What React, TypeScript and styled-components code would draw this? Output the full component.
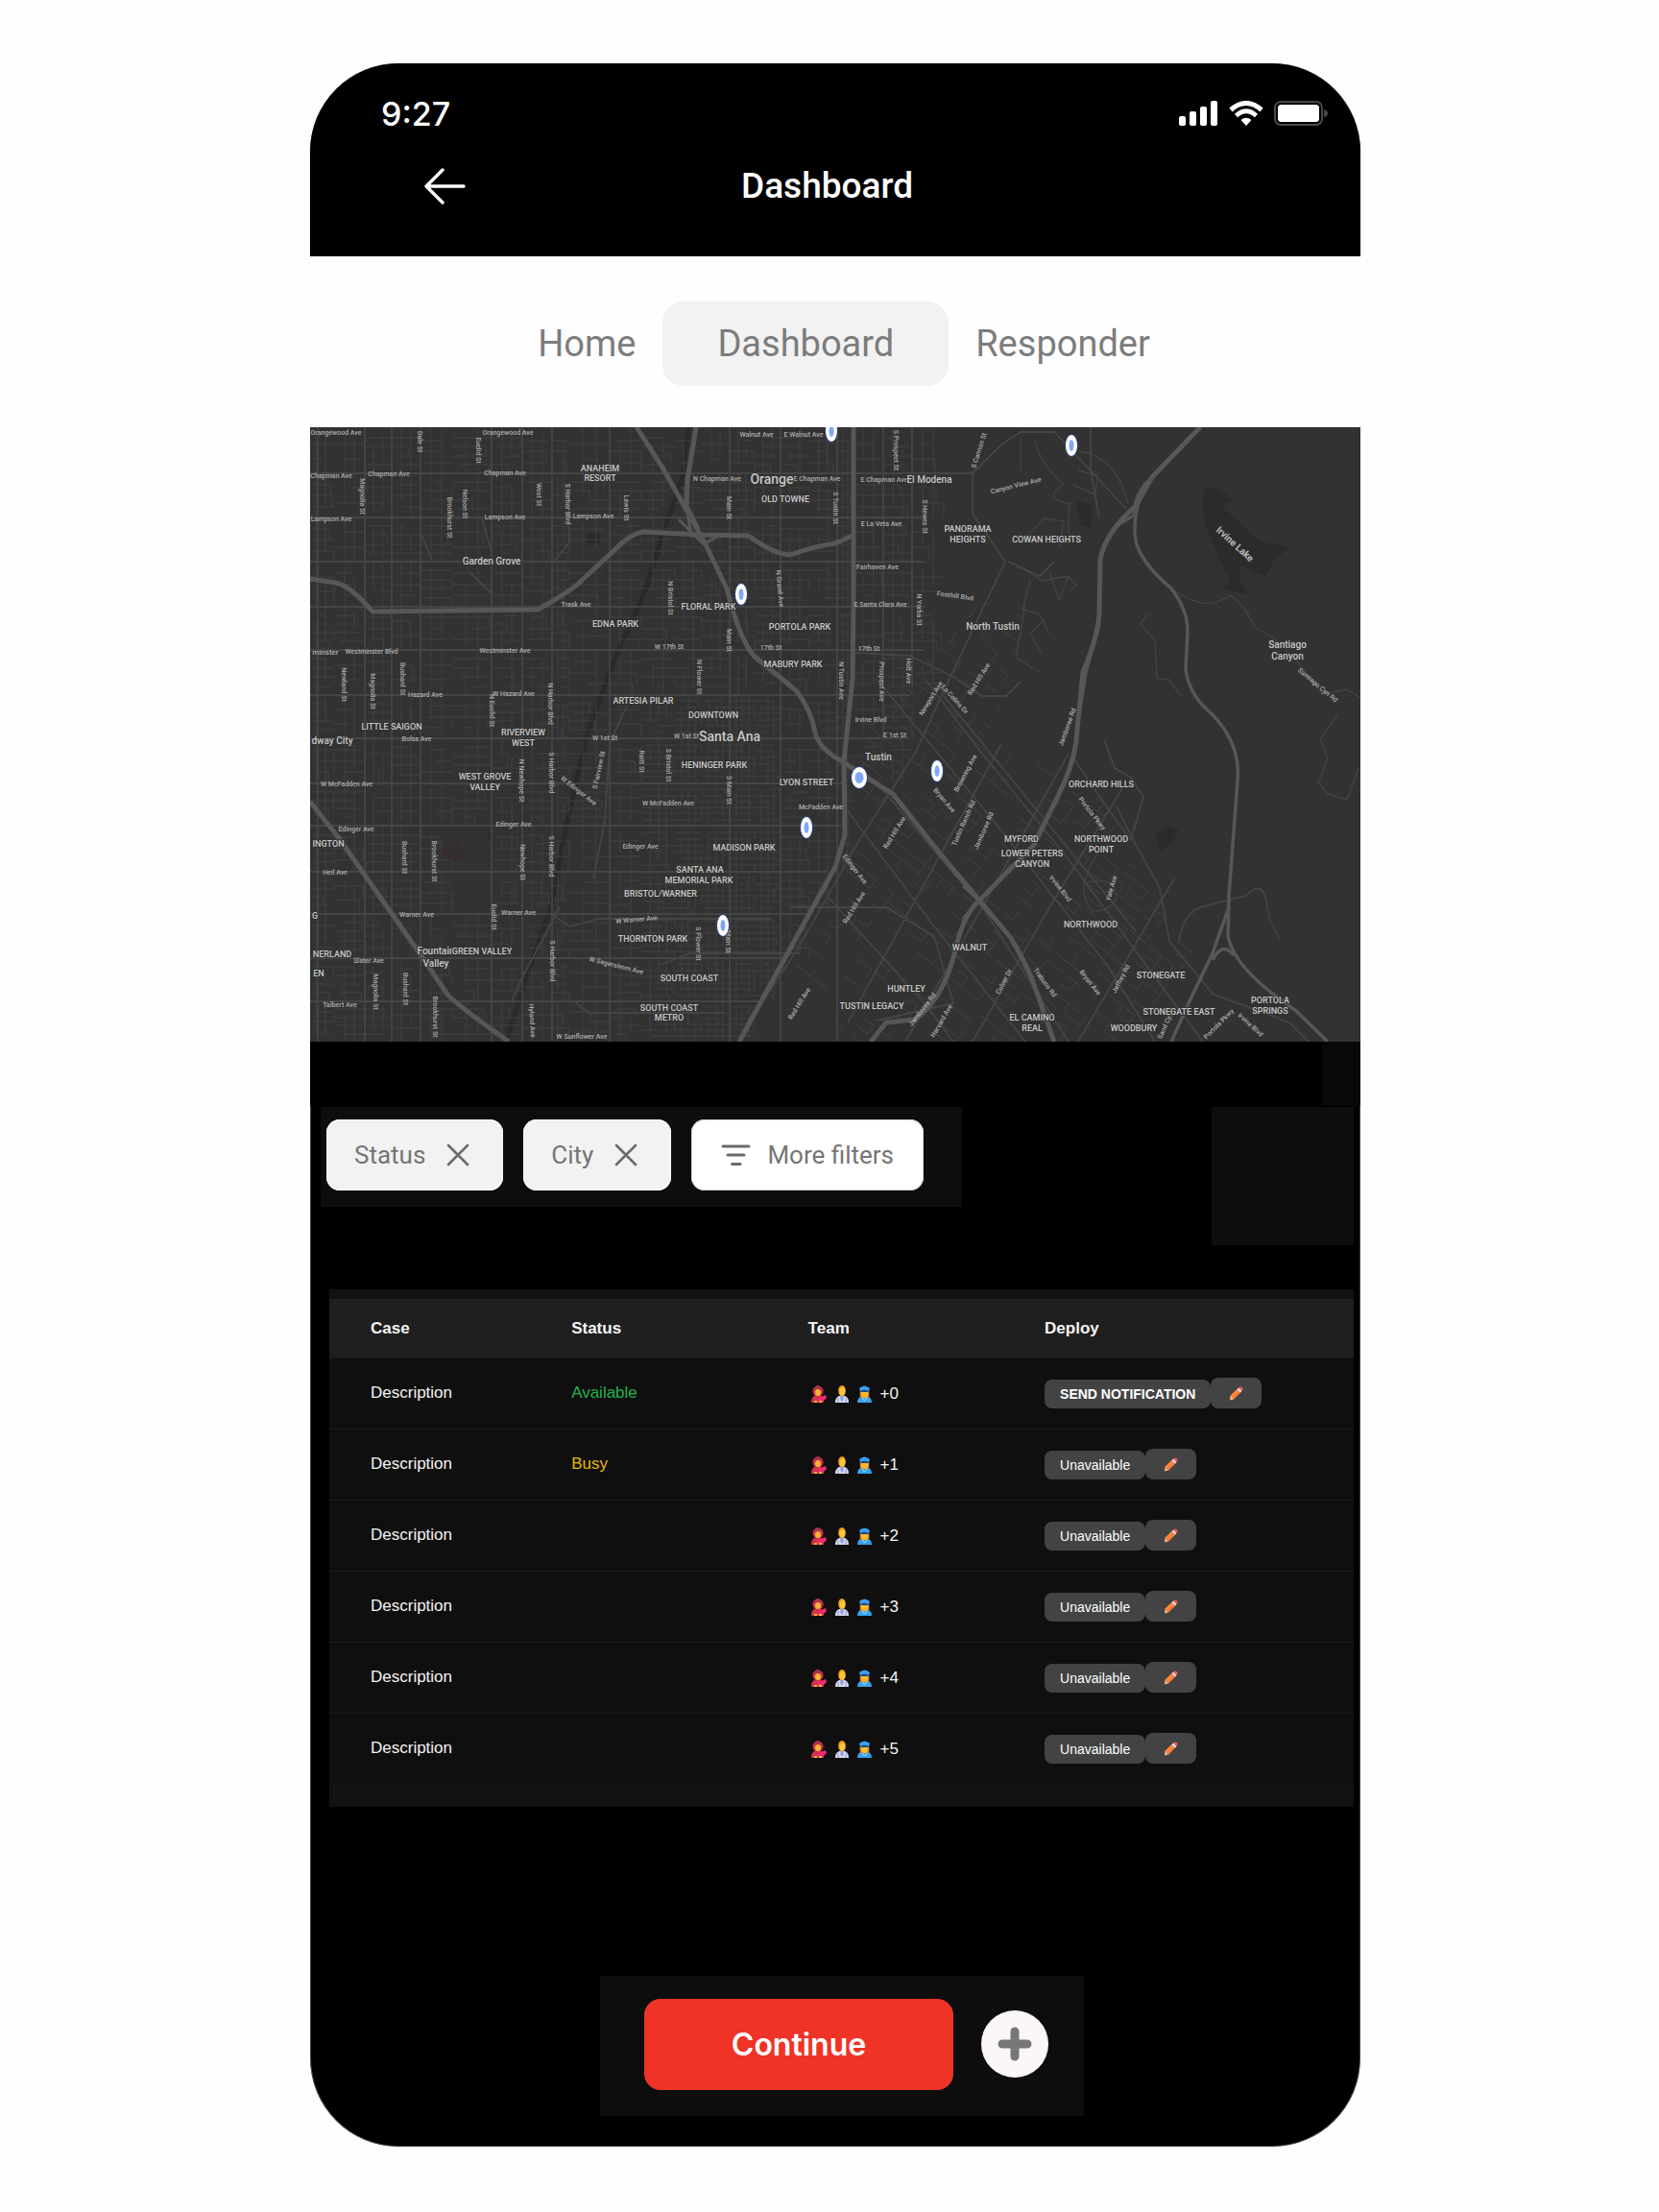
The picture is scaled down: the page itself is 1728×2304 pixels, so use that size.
import React from "react";
import styled, { createGlobalStyle } from "styled-components";

const GlobalStyle = createGlobalStyle`
  *, *::before, *::after { box-sizing: border-box; }
  body { margin: 0; background: #fefefe; font-family: Roboto, "Liberation Sans", sans-serif; }
  button { font: inherit; border: 0; cursor: pointer; }
`;

/* ---------- shell ---------- */

const Page = styled.div`
  padding: 66px 311px 69px 323px;
`;

const Phone = styled.div`
  display: flex;
  flex-direction: column;
`;

const Header = styled.header`
  height: 201px;
  padding-top: 30px;
  background: #000;
  color: #fff;
  border-radius: 92px 92px 0 0;
  box-shadow: 0 0 1px #555;
`;

const StatusBar = styled.div`
  display: flex;
  justify-content: space-between;
  align-items: center;
  height: 44px;
  padding: 0 34px 0 74px;
  font-family: Inter, Roboto, sans-serif;
  font-size: 34px;
  font-weight: 500;
`;

const StatusIcons = styled.div`
  display: flex;
  align-items: center;
  gap: 11px;
`;

const TitleBar = styled.div`
  display: grid;
  grid-template-columns: 1fr auto 1fr;
  align-items: center;
  height: 44px;
  margin-top: 32px;
  padding: 0 135px 0 118px;
`;

const BackButton = styled.button`
  justify-self: start;
  display: flex;
  padding: 0;
  background: none;
  color: #fff;
`;

const Title = styled.h1`
  margin: 0;
  font-size: 37px;
  font-weight: 500;
  line-height: 44px;
`;

const Tabs = styled.nav`
  display: flex;
  align-items: center;
  justify-content: center;
  gap: 28px;
  height: 178px;
  padding: 3px 0 0 18px;
  background: #fefefe;
`;

const Tab = styled.a<{ $active?: boolean }>`
  padding: 0 ${(p) => (p.$active ? 57 : 0)}px;
  border-radius: 22px;
  background: ${(p) => (p.$active ? "#f2f2f2" : "none")};
  color: #7c7c7c;
  font-size: 38px;
  line-height: 88px;
  text-decoration: none;
`;

const Band = styled.div`
  display: flex;
  justify-content: flex-end;
  height: 67px;
  background: #000;
  &::after {
    content: "";
    width: 40px;
    background: #080808;
  }
`;

const Body = styled.main`
  background: #000;
  border: solid #444;
  border-width: 0 1px 1px 1px;
  border-radius: 0 0 92px 92px;
  padding: 1px 6px 31px 10px;
`;

/* ---------- filters ---------- */

const FilterRow = styled.div`
  display: flex;
  justify-content: space-between;
  align-items: flex-start;
`;

const FilterPanel = styled.div`
  display: flex;
  gap: 21px;
  width: 668px;
  padding: 13px 6px 17px;
  background: #0d0d0d;
`;

const SidePatch = styled.div`
  width: 148px;
  height: 144px;
  background: #0d0d0d;
`;

const Chip = styled.button<{ $solid?: boolean }>`
  display: flex;
  align-items: center;
  gap: ${(p) => (p.$solid ? 17 : 22)}px;
  height: 74px;
  padding: 0 ${(p) => (p.$solid ? 31 : 35)}px 0 ${(p) => (p.$solid ? 31 : 29)}px;
  border-radius: 14px;
  background: ${(p) => (p.$solid ? "#fff" : "#f2f2f2")};
  box-shadow: inset 0 0 0 1px ${(p) => (p.$solid ? "#cfd4e0" : "#fafafa")};
  color: #757575;
  font-size: 26px;
  white-space: nowrap;
`;

/* ---------- table ---------- */

const TableCard = styled.section`
  margin: 46px 0 0 9px;
  padding: 10px 0 24px;
  background: #121212;
`;

const Table = styled.table`
  width: 100%;
  table-layout: fixed;
  border-collapse: collapse;
  font-family: "Liberation Sans", Arial, sans-serif;
  font-size: 17px;
  color: #f4f4f4;
`;

const HeadCell = styled.th<{ $share?: string }>`
  width: ${(p) => p.$share ?? "auto"};
  height: 61px;
  padding: 0 0 0 43px;
  text-align: left;
  background: #1f1f1f;
`;

const Cell = styled.td<{ $tone?: string }>`
  height: 74px;
  padding: 0 0 0 43px;
  background: #0f0f0f;
  color: ${(p) => p.$tone ?? "inherit"};
  box-shadow: inset 0 1px 0 #1c1c1c;
`;

const Team = styled.div`
  display: flex;
  align-items: center;
  gap: 9px;
  padding: 2px 0 0 3px;
`;

const Actions = styled.div`
  display: flex;
  align-items: flex-end;
`;

const ActionButton = styled.button<{ $strong?: boolean }>`
  height: 30px;
  padding: 0 16px;
  border-radius: 8px;
  background: #434343;
  color: #fff;
  font-size: 14px;
  font-weight: ${(p) => (p.$strong ? 700 : 400)};
  white-space: nowrap;
`;

const EditButton = styled.button`
  display: flex;
  align-items: center;
  justify-content: center;
  width: 53px;
  height: 32px;
  padding: 0;
  border-radius: 8px;
  background: #434343;
`;

/* ---------- footer ---------- */

const Footer = styled.div`
  display: flex;
  align-items: center;
  gap: 29px;
  width: 504px;
  height: 146px;
  margin: 176px 0 0 291px;
  padding: 0 0 4px 46px;
  background: #0d0d0d;
`;

const ContinueButton = styled.button`
  width: 322px;
  height: 95px;
  border-radius: 17px;
  background: #ef3326;
  color: #fff;
  font-family: Inter, Roboto, sans-serif;
  font-size: 32px;
  font-weight: 600;
`;

const AddButton = styled.button`
  display: flex;
  align-items: center;
  justify-content: center;
  width: 70px;
  height: 70px;
  padding: 0;
  border-radius: 50%;
  background: #fcf7f7;
`;

/* ---------- icons ---------- */

const Signal = () => (
  <svg width="41" height="26" viewBox="0 0 41 26" fill="#fff" aria-hidden="true">
    <rect x="0" y="16" width="7" height="10" rx="2" />
    <rect x="11" y="11" width="7" height="15" rx="2" />
    <rect x="22" y="6" width="7" height="20" rx="2" />
    <rect x="33" y="0" width="7" height="26" rx="2" />
  </svg>
);

const Wifi = () => (
  <svg width="36" height="26" viewBox="0 0 36 26" fill="none" stroke="#fff" aria-hidden="true">
    <path d="M2 9.5 Q18 -4.5 34 9.5" strokeWidth="5" />
    <path d="M7.5 15.5 Q18 6 28.5 15.5" strokeWidth="4.6" />
    <path d="M12.500 20 Q18 15.500 23.500 20 L18 26Z" fill="#fff" stroke="none" />
  </svg>
);

const Battery = () => (
  <svg width="56" height="26" viewBox="0 0 56 26" aria-hidden="true">
    <rect x="1" y="1" width="49" height="24" rx="6" fill="none" stroke="#4a4a4a" strokeWidth="2" />
    <rect x="4" y="4" width="43" height="18" rx="3.500" fill="#fff" />
    <path d="M52 9 Q56 10 56 13 Q56 16 52 17Z" fill="#4a4a4a" />
  </svg>
);

const Arrow = () => (
  <svg width="44" height="38" viewBox="0 0 44 38" fill="none" stroke="currentColor" strokeWidth="3.400" strokeLinecap="round" strokeLinejoin="round" aria-hidden="true">
    <path d="M42 19H3M20 2L3 19L20 36" />
  </svg>
);

const Cross = () => (
  <svg width="24" height="24" viewBox="0 0 24 24" stroke="#6b6b6b" strokeWidth="2.600" strokeLinecap="round" aria-hidden="true">
    <path d="M2 2L22 22M22 2L2 22" />
  </svg>
);

const FilterIcon = () => (
  <svg width="31" height="24" viewBox="0 0 31 24" stroke="#6b6b6b" strokeWidth="3" strokeLinecap="round" aria-hidden="true">
    <path d="M2 3H29M7 12H24M11.500 21.500H20" />
  </svg>
);

const Plus = () => (
  <svg width="36" height="36" viewBox="0 0 36 36" stroke="#777" strokeWidth="9" strokeLinecap="round" aria-hidden="true">
    <path d="M18 5V31M5 18H31" />
  </svg>
);

const Pencil = () => (
  <svg width="15" height="15" viewBox="0 0 15 15" aria-hidden="true">
    <path d="M1.500 9.500L9 2.500L12.500 6L5 13.500Z" fill="#ff8a3d" />
    <path d="M3.500 11.500L10.500 4.500L12.500 6L5 13.500Z" fill="#f8793c" />
    <path d="M1.500 9.500L5 13.500L1 14.500Z" fill="#f3b48b" />
    <path d="M8.500 3L10.500 1.500L13.500 4.500L12 6.500Z" fill="#dfe3ec" />
    <path d="M10 1.500Q12 -0.500 13.800 1.200Q15.500 3 13.500 5Z" fill="#ee5a5a" />
  </svg>
);

const Firefighter = () => (
  <svg width="16" height="18" viewBox="0 0 16 18" aria-hidden="true">
    <path d="M0 18Q0 10 7 10Q13 10 13 18Z" fill="#d5314f" />
    <circle cx="7" cy="6" r="5.500" fill="#d12f50" />
    <ellipse cx="7" cy="7.500" rx="3" ry="3.600" fill="#f7b52c" />
    <path d="M3 5Q7 2 11 5V4Q9 0 7 0Q4 0 3 4Z" fill="#a9354a" />
    <path d="M7 13L15 10L16 13L12 17H7Z" fill="#ee2c70" />
    <path d="M3 16H6V18H3ZM8 16H11V18H8Z" fill="#f7b52c" />
  </svg>
);

const Medic = () => (
  <svg width="14" height="18" viewBox="0 0 14 18" aria-hidden="true">
    <path d="M0 18Q0 10.500 7 10.500Q14 10.500 14 18Z" fill="#d9dcf3" />
    <path d="M5 10H9L8.500 15L7 17L5.500 15Z" fill="#8ea1dc" />
    <ellipse cx="7" cy="5.500" rx="3.800" ry="5.500" fill="#f0a21c" />
    <ellipse cx="7.500" cy="6.500" rx="2.800" ry="4" fill="#fbc63b" />
    <path d="M3 13V18M11 13V18" stroke="#8c93c8" />
  </svg>
);

const Officer = () => (
  <svg width="15" height="18" viewBox="0 0 15 18" aria-hidden="true">
    <path d="M0 18Q0 11 7.500 11Q15 11 15 18Z" fill="#36a3ee" />
    <path d="M3 5Q2 12 4 13H11Q13 12 12 5Z" fill="#e58b22" />
    <ellipse cx="7.500" cy="8.500" rx="3.400" ry="4.200" fill="#fbbd35" />
    <path d="M2 3Q7.500 -2 13 3L12 6Q7.500 4 3 6Z" fill="#3b9ff0" />
    <path d="M3.500 5.500Q7.500 4 11.500 5.500V7H3.500Z" fill="#184a84" />
    <path d="M5 13L7.500 16L10 13" stroke="#bfe2ff" fill="none" />
  </svg>
);

/* ---------- map ---------- */

const MapSvg = styled.svg`
  display: block;
  width: 100%;
  height: auto;
  background: #323232;
  font-family: Roboto, "Liberation Sans", sans-serif;
`;

const random = (seed: number) => () => {
  seed = (seed * 16807) % 2147483647;
  return seed / 2147483647;
};

const XS = [-3, 25, 57, 85, 115, 148, 189, 221, 252, 270, 312, 345, 380, 408, 437, 463, 490, 520, 549, 566, 597, 627, 660];
const YS = [2, 48, 94, 140, 187, 232, 279, 324, 371, 415, 463, 507, 553, 598, 640];

const southEdge = (y: number) => (y < 340 ? (y < 240 ? 650 : 625) : 556 - Math.max(0, (y - 430) * 0.5));

/* Short residential streets that fill the blocks between arterials. */
const localStreets = () => {
  const r = random(97);
  let d = "";
  for (let i = 0; i < XS.length - 1; i++) {
    for (let j = 0; j < YS.length - 1; j++) {
      const x0 = XS[i], x1 = XS[i + 1], y0 = YS[j], y1 = YS[j + 1];
      if (x1 > southEdge(y0) + 10) continue;
      if (x0 > 130 && x1 < 195 && y0 > 410 && y0 < 500) continue;
      const w = x1 - x0, h = y1 - y0;
      const dense = x0 > 340 && x0 < 480 && y0 > 270;
      const n = dense ? 7 : 3 + Math.floor(r() * 3);
      for (let k = 1; k < n; k++) {
        const y = Math.round(y0 + (h * k) / n);
        const a = Math.round(x0 + (r() < 0.5 ? 0 : r() * w * 0.5));
        const b = Math.round(x1 - (r() < 0.5 ? 0 : r() * w * 0.5));
        d += `M${a} ${y}H${b}`;
        if (r() < 0.5) d += `V${Math.round(y + h / n)}`;
      }
      const m = dense ? 4 : 3;
      for (let k = 1; k < m; k++) {
        const x = Math.round(x0 + (w * k) / m);
        const a = Math.round(y0 + (r() < 0.4 ? 0 : r() * h * 0.5));
        const b = Math.round(y1 - (r() < 0.4 ? 0 : r() * h * 0.5));
        d += `M${x} ${a}V${b}`;
      }
    }
  }
  return d;
};

/* The rotated grid around Tustin and Irvine. */
const tiltedStreets = () => {
  const r = random(41);
  let d = "";
  for (let u = -220; u < 280; u += 11) {
    for (let v = -230; v < 230; v += 23) {
      if (r() < 0.48) continue;
      const du = r() < 0.5 ? 20 : 12;
      d += `M${u} ${v}v${du}`;
      if (r() < 0.6) d += `h${r() < 0.5 ? 11 : -11}`;
    }
  }
  return d;
};

const LOCAL = localStreets();
const TILTED = tiltedStreets();

const ARTERIALS =
  YS.slice(1, 14).map((y) => `M0 ${y}H${y < 250 ? 640 : southEdge(y)}`).join("") +
  [8, 57, 85, 115, 189, 221, 252, 312, 437, 490, 549].map((x) => `M${x} 0V640`).join("") +
  "M597 0V325M627 0V270M115 110L128 140M179 95L189 130M165 150L188 172M270 60V120L252 142M600 48H690L720 18L740 5H775L850 85" +
  "M690 48V90L724 140L700 190L660 275L630 340L572 430L510 540L450 630M727 140L760 155L775 140M640 262L700 340L790 450L900 600L930 640" +
  "M590 262L720 420L830 560L880 640M566 235L625 238L670 260L700 280L725 280L740 265M540 490L640 600L670 640M560 400L650 520L745 640" +
  "M590 370L700 500L790 640M660 280L860 525M790 340L700 500L620 640M850 370L770 500L690 640M900 470L800 640M720 330L560 620" +
  "M813 0V45L822 95M840 395L860 435L885 480L895 535L940 590L1020 620L1040 640M795 345L840 410L855 430L868 385L855 365L838 355L827 325M905 535Q910 502 935 498L975 488M975 488Q990 472 995 490M500 500H600L650 530L670 600L590 618M0 507H252L270 520L300 512H480M0 553H300M365 560L395 548H510M210 598L220 575L260 500M250 598H275L290 610H430M330 290L312 330L307 410L295 470";

const FREEWAYS = [
  "M0 158L27 162Q42 165 65 192L237 190Q262 176 277 165L317 128Q332 112 346 109L407 112L457 113Q482 132 500 133Q525 124 547 121L565 113",
  "M340 0L367 42L410 118L434 168Q447 220 462 238L507 275Q522 295 526 318Q530 335 554 348L607 382L657 445L730 532Q746 560 752 575L775 640",
  "M402 0L393 55L392 82L404 106",
  "M566 0V182L565 262L556 348L557 425L547 458L484 572L447 640",
  "M0 390L30 428L114 548L144 592Q160 607 207 640",
  "M927 0L877 52L860 82Q828 110 823 138L822 195Q820 220 805 255L799 315Q798 345 780 382L754 435L697 493Q680 508 672 545Q660 595 630 617L600 620L584 640",
];
const TOLLWAYS = [
  "M870 58Q853 100 862 125Q870 145 897 168Q914 190 914 212L912 252Q915 275 932 292Q970 325 966 368L957 488L956 530Q962 558 1000 588L1027 608L1060 640",
  "M957 500L940 548L914 602L897 640",
  "M797 325L808 255L822 205M940 555Q950 535 962 550",
];
const CANYONS =
  "M897 168Q935 195 957 175Q970 180 984 208L1004 220L1027 242L1054 278L1080 273L1094 282M800 25Q840 30 852 80M735 145Q750 150 762 160L790 155M750 160L742 190L760 195L770 215M770 150L780 180L790 155L798 165L792 170M745 185L735 240L760 255M765 200L750 215L762 235M872 195L865 205L880 222L882 262L895 263L907 280M1070 300L1052 325L1060 345L1050 370L1060 382L1080 388L1092 355M755 15Q762 40 785 60Q760 75 795 80M740 120L765 95L785 98L780 125M800 45L820 50L818 70L795 60M995 490L1000 515L1010 533M820 445Q795 480 815 505Q850 500 835 475Q825 470 805 475M740 10V45M790 80V120";

type Label = [string, number, number, number?, number?];
/* text, centre x, baseline y, size, rotation */
const PLACES: Label[] = [
  ["ANAHEIM", 302, 46, 9], ["RESORT", 302, 56, 9], ["Garden Grove", 189, 143, 10], ["EDNA PARK", 318, 208, 9],
  ["LITTLE SAIGON", 85, 315, 9], ["RIVERVIEW", 222, 321, 9], ["WEST", 222, 332, 9], ["ARTESIA PILAR", 347, 288, 9],
  ["Orange", 481, 59, 14], ["OLD TOWNE", 495, 78, 9], ["El Modena", 645, 58, 10], ["PANORAMA", 685, 109, 9], ["HEIGHTS", 685, 120, 9],
  ["COWAN HEIGHTS", 767, 120, 9], ["FLORAL PARK", 415, 190, 9], ["PORTOLA PARK", 510, 211, 9], ["MABURY PARK", 503, 250, 9],
  ["North Tustin", 711, 211, 10], ["DOWNTOWN", 420, 303, 9], ["Santa Ana", 437, 327, 14], ["HENINGER PARK", 421, 355, 9],
  ["LYON STREET", 517, 373, 9], ["Tustin", 592, 347, 10], ["MADISON PARK", 452, 441, 9], ["SANTA ANA", 406, 464, 9],
  ["MEMORIAL PARK", 405, 475, 9], ["BRISTOL/WARNER", 365, 489, 9], ["THORNTON PARK", 357, 536, 9], ["SOUTH COAST", 395, 577, 9],
  ["SOUTH COAST", 374, 608, 9], ["METRO", 374, 618, 9], ["WEST GROVE", 182, 367, 9], ["VALLEY", 182, 378, 9],
  ["dway City", 23, 330, 10], ["INGTON", 19, 437, 9], ["Fountain", 131, 549, 10], ["GREEN VALLEY", 179, 549, 9], ["Valley", 131, 562, 10],
  ["NERLAND", 23, 552, 9], ["EN", 9, 572, 9], ["G", 5, 512, 9], ["ORCHARD HILLS", 824, 375, 9], ["MYFORD", 741, 432, 9], ["LOWER PETERS", 752, 447, 9],
  ["CANYON", 752, 458, 9], ["NORTHWOOD", 824, 432, 9], ["POINT", 824, 443, 9], ["NORTHWOOD", 813, 521, 9], ["WALNUT", 687, 545, 9],
  ["HUNTLEY", 621, 588, 9], ["TUSTIN LEGACY", 585, 606, 9], ["STONEGATE", 886, 574, 9], ["STONEGATE EAST", 905, 612, 9],
  ["WOODBURY", 858, 629, 9], ["PORTOLA", 1000, 600, 9], ["SPRINGS", 1000, 611, 9], ["EL CAMINO", 752, 618, 9], ["REAL", 752, 629, 9],
  ["Santiago", 1018, 230, 10], ["Canyon", 1018, 242, 10], ["Irvine Lake", 963, 122, 10, 42],
];
const STREETS: Label[] = [
  ["Orangewood Ave", 27, 8], ["Orangewood Ave", 206, 8], ["Chapman Ave", 22, 53], ["Chapman Ave", 82, 51], ["Chapman Ave", 203, 50],
  ["Lampson Ave", 22, 98], ["Lampson Ave", 203, 96], ["Lampson Ave", 295, 95], ["Trask Ave", 277, 187], ["minster", 16, 237, 8],
  ["Westminster Blvd", 64, 236], ["Westminster Ave", 203, 235], ["Hazard Ave", 120, 281], ["W Hazard Ave", 212, 280], ["Bolsa Ave", 111, 327],
  ["W 17th St", 374, 231], ["17th St", 480, 232], ["17th St", 582, 233], ["Walnut Ave", 465, 10], ["E Walnut Ave", 514, 10],
  ["N Chapman Ave", 424, 56], ["E Chapman Ave", 528, 56], ["E Chapman Ave", 598, 57], ["E La Veta Ave", 595, 103], ["Fairhaven Ave", 591, 148],
  ["E Santa Clara Ave", 594, 187], ["Foothill Blvd", 672, 175, 7, 8], ["Irvine Blvd", 584, 307], ["E 1st St", 609, 323], ["W 1st St", 392, 324],
  ["W 1st St", 307, 326], ["W McFadden Ave", 38, 374], ["W McFadden Ave", 373, 394], ["McFadden Ave", 532, 398], ["Edinger Ave", 48, 421],
  ["Edinger Ave", 212, 416], ["Edinger Ave", 344, 439], ["Heil Ave", 26, 466], ["Warner Ave", 111, 510], ["Warner Ave", 217, 508],
  ["W Warner Ave", 340, 512, 7, -5], ["Slater Ave", 61, 558], ["W Segerstrom Ave", 319, 560, 7, 14], ["Talbert Ave", 31, 604], ["W Sunflower Ave", 283, 637],
  ["Canyon View Ave", 735, 60, 7, -14], ["Santiago Cyn Rd", 1050, 268, 7, 40], ["W Edinger Ave", 280, 378, 7, 38],
  ["Magnolia St", 55, 72, 7, 90], ["Newland St", 36, 268, 7, 90], ["Magnolia St", 66, 275, 7, 90], ["Bushard St", 97, 262, 7, 90],
  ["Brookhurst St", 146, 94, 7, 90], ["Nelson St", 162, 80, 7, 90], ["Euclid St", 176, 24, 7, 90], ["West St", 239, 70, 7, 90],
  ["S Harbor Blvd", 269, 80, 7, 90], ["Lewis St", 330, 84, 7, 90], ["Dale St", 115, 15, 7, 90], ["N Euclid St", 190, 295, 7, 90],
  ["N Harbor Blvd", 251, 288, 7, 90], ["N Bristol St", 376, 178, 7, 90], ["Main St", 437, 84, 7, 90], ["Main St", 437, 222, 7, 90],
  ["N Grand Ave", 490, 168, 7, 85], ["S Tustin St", 548, 84, 7, 90], ["N Tustin Ave", 554, 264, 7, 90], ["N Flower St", 406, 260, 7, 90],
  ["S Prospect St", 611, 24, 7, 90], ["S Hewes St", 641, 93, 7, 90], ["Holt Ave", 624, 254, 7, 90], ["Prospect Ave", 596, 265, 7, 90],
  ["N Yorba St", 635, 190, 7, 90], ["S Cannon St", 696, 24, 7, -72], ["Magnolia St", 69, 588, 7, 90], ["Bushard St", 100, 585, 7, 90],
  ["Brookhurst St", 130, 452, 7, 90], ["Bushard St", 99, 448, 7, 90], ["Brookhurst St", 131, 614, 7, 90], ["Euclid St", 192, 510, 7, 90],
  ["N Newhope St", 221, 368, 7, 90], ["Newhope St", 222, 453, 7, 90], ["S Harbor Blvd", 252, 360, 7, 90], ["S Harbor Blvd", 252, 447, 7, 90],
  ["S Harbor Blvd", 253, 556, 7, 90], ["Hyland Ave", 232, 618, 7, 87], ["S Fairview St", 300, 357, 7, -78], ["Raitt St", 346, 348, 7, 90],
  ["S Bristol St", 374, 352, 7, 90], ["S Main St", 437, 378, 7, 90], ["S Flower St", 405, 538, 7, 90], ["Main St", 436, 536, 7, 90],
  ["Newport Ave", 646, 282, 7, -58], ["La Colina Dr", 672, 283, 7, 48], ["Red Hill Ave", 696, 262, 7, -58], ["Browning Ave", 682, 360, 7, -62],
  ["Bryan Ave", 661, 388, 7, 50], ["Tustin Ranch Rd", 680, 412, 7, -66], ["Jamboree Rd", 701, 420, 7, -66], ["Red Hill Ave", 608, 422, 7, -58],
  ["Edinger Ave", 568, 460, 7, 52], ["Red Hill Ave", 566, 500, 7, -58], ["Red Hill Ave", 509, 600, 7, -58], ["Jamboree Rd", 637, 606, 7, -52],
  ["Harvard Ave", 657, 618, 7, -60], ["Culver Dr", 722, 577, 7, -62], ["Portola Pkwy", 815, 402, 7, 52], ["Irvine Blvd", 782, 480, 7, 52],
  ["Yale Ave", 834, 480, 7, -74], ["Trabuco Rd", 766, 578, 7, 54], ["Bryan Ave", 813, 578, 7, 52], ["Jeffrey Rd", 844, 574, 7, -62],
  ["Jamboree Rd", 788, 312, 7, -70], ["Sand Cyn", 890, 623, 7, -66], ["Portola Pkwy", 946, 621, 7, -45], ["Irvine Blvd", 980, 622, 7, 42],
];
const PINS: [number, number, number][] = [
  [543, 4, 6], [793, 19, 6], [449, 174, 6], [572, 365, 8], [653, 358, 6], [517, 417, 6], [430, 519, 6],
];

const renderLabel = ([text, x, y, size = 7, turn = 0]: Label, i: number) => (
  <text key={i} fontSize={size} textAnchor="middle" transform={`translate(${x} ${y}) rotate(${turn})`} dy={turn ? 3 : 0}>
    {text}
  </text>
);

const CityMap = () => (
  <MapSvg viewBox="0 0 1094 640" role="img" aria-label="Map of Orange, Santa Ana and Tustin with responder locations">
    <defs>
      <clipPath id="tustin">
        <path d="M640 250L700 175L745 190L735 270L700 330L795 350L850 420L880 500L950 580L935 640H440L556 440L575 330Z" />
      </clipPath>
    </defs>
    <g fill="#2b2b2b">
      <path d="M932 63L947 65L962 75L950 83L967 98L980 112L994 120L1020 125L1004 138L995 155L970 145L967 158L979 175L952 168L959 158L947 138L934 105L929 85Z" />
      <path d="M798 75L815 82L812 105L803 102Z" />
      <path d="M880 425L895 415L905 420L898 432L886 442Z" />
      <path d="M135 435L155 430L162 450L140 453Z" fill="#352e2e" />
      <path d="M288 110H302V122H288ZM184 420L192 432L186 430Z" />
    </g>
    <path d="M394 0L387 55L367 112L350 168L317 242L287 325L267 415L250 502L227 568L204 640" fill="none" stroke="#292929" strokeWidth="5" />
    <g fill="none" stroke="#404040">
      <path d={LOCAL} />
      <g clipPath="url(#tustin)">
        <path d={TILTED} transform="translate(700 460) rotate(-52)" />
      </g>
      <path d={CANYONS} stroke="#434343" strokeWidth="1.400" strokeLinejoin="round" />
      <path d={ARTERIALS} stroke="#454545" strokeWidth="1.800" strokeLinejoin="round" />
    </g>
    <g fill="none" stroke="#575757" strokeLinejoin="round">
      {TOLLWAYS.map((d) => <path key={d} d={d} strokeWidth="3.500" />)}
      {FREEWAYS.map((d) => <path key={d} d={d} strokeWidth="5" />)}
      <path d="M384 96L410 122L425 113M393 92L398 115M877 52Q858 68 858 92L838 104M680 512L697 493L680 478" strokeWidth="3" />
    </g>
    <g fill="#adadad" fontWeight="500">{STREETS.map(renderLabel)}</g>
    <g fill="#c8c8c8" fontWeight="500" stroke="#323232" strokeWidth="2" paintOrder="stroke">{PLACES.map(renderLabel)}</g>
    {PINS.map(([x, y, rx]) => (
      <g key={`${x}-${y}`}>
        <ellipse cx={x} cy={y} rx={rx + 1} ry="12" fill="#2d4677" />
        <ellipse cx={x} cy={y} rx={rx} ry="11" fill="#fff" />
        <ellipse cx={x} cy={y} rx={rx - 3.500} ry="6" fill="#7ea6fa" />
      </g>
    ))}
  </MapSvg>
);

/* ---------- data ---------- */

const ROWS = [
  { status: "Available", tone: "#22b24c", ready: true },
  { status: "Busy", tone: "#e6b80c", ready: false },
  { status: "", ready: false },
  { status: "", ready: false },
  { status: "", ready: false },
  { status: "", ready: false },
];

export default function App() {
  return (
    <Page>
      <GlobalStyle />
      <Phone>
        <Header>
          <StatusBar>
            <span>9:27</span>
            <StatusIcons>
              <Signal />
              <Wifi />
              <Battery />
            </StatusIcons>
          </StatusBar>
          <TitleBar>
            <BackButton aria-label="Back"><Arrow /></BackButton>
            <Title>Dashboard</Title>
          </TitleBar>
        </Header>
        <Tabs>
          <Tab href="#home">Home</Tab>
          <Tab href="#dashboard" $active aria-current="page">Dashboard</Tab>
          <Tab href="#responder">Responder</Tab>
        </Tabs>
        <CityMap />
        <Band />
        <Body>
          <FilterRow>
            <FilterPanel>
              <Chip>Status<Cross /></Chip>
              <Chip>City<Cross /></Chip>
              <Chip $solid><FilterIcon />More filters</Chip>
            </FilterPanel>
            <SidePatch />
          </FilterRow>
          <TableCard>
            <Table>
              <thead>
                <tr>
                  <HeadCell $share="19.6%">Case</HeadCell>
                  <HeadCell $share="23.1%">Status</HeadCell>
                  <HeadCell $share="23.1%">Team</HeadCell>
                  <HeadCell>Deploy</HeadCell>
                </tr>
              </thead>
              <tbody>
                {ROWS.map((row, i) => (
                  <tr key={i}>
                    <Cell>Description</Cell>
                    <Cell $tone={row.tone}>{row.status}</Cell>
                    <Cell>
                      <Team>
                        <Firefighter />
                        <Medic />
                        <Officer />
                        <span>+{i}</span>
                      </Team>
                    </Cell>
                    <Cell>
                      <Actions>
                        <ActionButton $strong={row.ready}>{row.ready ? "SEND NOTIFICATION" : "Unavailable"}</ActionButton>
                        <EditButton aria-label="Edit"><Pencil /></EditButton>
                      </Actions>
                    </Cell>
                  </tr>
                ))}
              </tbody>
            </Table>
          </TableCard>
          <Footer>
            <ContinueButton>Continue</ContinueButton>
            <AddButton aria-label="Add"><Plus /></AddButton>
          </Footer>
        </Body>
      </Phone>
    </Page>
  );
}
